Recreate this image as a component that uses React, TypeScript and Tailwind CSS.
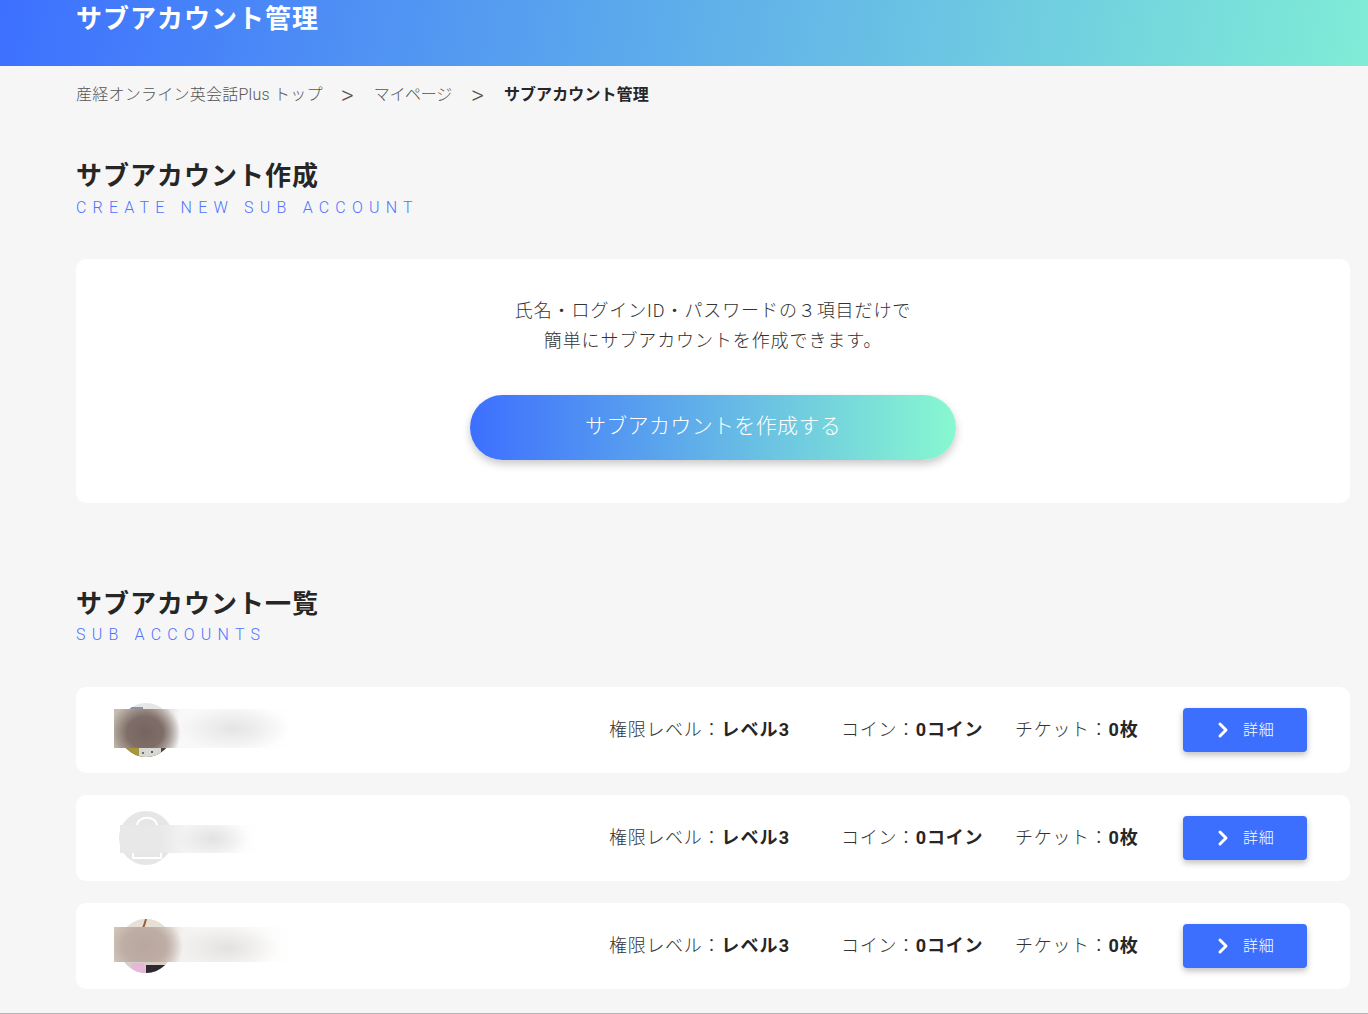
import { ChevronRight } from "lucide-react";

const rows = [
  {
    id: "one",
    box: "left-[38px] top-[22px] w-[182px] h-[39px]",
    patch: "bg-[radial-gradient(ellipse_56px_24px_at_66%_50%,#e4e4e4_0%,rgba(240,240,240,0)_100%),radial-gradient(ellipse_36px_32px_at_17%_60%,#766460_0%,#7f6e68_50%,rgba(190,180,170,0)_100%),linear-gradient(90deg,#c5bdb0_0%,#b8aea6_18%,#f8f8f8_36%,#ffffff_100%)]",
  },
  {
    id: "two",
    box: "left-[44px] top-[30px] w-[139px] h-[28px]",
    patch: "bg-[radial-gradient(ellipse_36px_20px_at_67%_50%,#e2e2e2_0%,rgba(240,240,240,0)_100%),linear-gradient(90deg,#e8e8e8_0%,#e8e8e8_28%,#f4f4f4_48%,#fcfcfc_85%,#ffffff_100%)]",
  },
  {
    id: "three",
    box: "left-[38px] top-[24px] w-[182px] h-[35px]",
    patch: "bg-[radial-gradient(ellipse_52px_24px_at_62%_60%,#e4e2e0_0%,rgba(240,240,240,0)_100%),radial-gradient(ellipse_38px_32px_at_17%_55%,#b9a79e_0%,#bdada4_55%,rgba(200,190,180,0)_100%),linear-gradient(90deg,#d3c9bd_0%,#c9bdb2_18%,#f5f3f1_38%,#ffffff_100%)]",
  },
];

function Avatar({ id }: { id: string }) {
  return (
    <div className="h-[54px] w-[54px] shrink-0 overflow-hidden rounded-full bg-[#e6e6e6]">
      <svg viewBox="0 0 54 54" className="h-full w-full" fill="none">
        {id === "one" && (
          <>
            <rect x="8" y="4" width="16" height="2" fill="#8d94a0" />
            <rect y="30" width="54" height="24" fill="#5f5149" />
            <rect y="44" width="54" height="10" fill="#a8963e" />
            <rect x="20" y="44" width="22" height="10" fill="#d9d9d4" />
            <circle cx="24" cy="50" r="1" fill="#4a4a4a" />
            <circle cx="33" cy="49" r="1" fill="#333333" />
            <rect x="42" y="42" width="12" height="12" fill="#4b4642" />
          </>
        )}
        {id === "two" && (
          <g stroke="#ffffff" strokeWidth="2">
            <path d="M18 24V15c0-11 20-11 20 0v9" />
            <path d="M14 47v-8h28v8z" />
          </g>
        )}
        {id === "three" && (
          <>
            <rect width="54" height="54" fill="#e6e0d6" />
            <path d="M27 0c-1 4-2 7-3 9" stroke="#9a5f3c" strokeWidth="2" />
            <rect y="36" width="54" height="18" fill="#d8cfc8" />
            <path d="M12 44h13l2 10H14z" fill="#e5b7d8" />
            <path d="M27 46h27v8H27z" fill="#2c2a2e" />
          </>
        )}
      </svg>
    </div>
  );
}

function Heading({ ja, en, gap }: { ja: string; en: string; gap: string }) {
  return (
    <div>
      <h2 className="text-[26px] leading-[36px] font-bold tracking-[1px] text-[#262626]">{ja}</h2>
      <p className={`${gap} text-[16px] leading-[24px] font-light tracking-[6.2px] text-[#4f73ff]`}>{en}</p>
    </div>
  );
}

export default function App() {
  return (
    <div className="h-[1014px] overflow-hidden border-b border-[#b5b5b5] bg-[#f6f6f6] font-['Roboto','Noto_Sans_CJK_JP',sans-serif] text-[#333333]">
      <div className="h-[66px] bg-[linear-gradient(100deg,#3d70ff_0%,#80ecd6_100%)] pl-[76px]">
        <h1 className="text-[26px] leading-[39px] font-bold tracking-[1px] text-white">サブアカウント管理</h1>
      </div>

      <div className="flex h-[58px] items-center pl-[76px] text-[16px] font-light text-[#555555]">
        <span className="tracking-[0.25px]">産経オンライン英会話Plus トップ</span>
        <span className="mr-[20px] ml-[18px] text-[25px] leading-none">&gt;</span>
        <span className="tracking-[-0.3px]">マイページ</span>
        <span className="mr-[20px] ml-[19px] text-[25px] leading-none">&gt;</span>
        <span className="font-bold tracking-[0.1px] text-[#262626]">サブアカウント管理</span>
      </div>

      <div className="pt-[34px] pr-[18px] pl-[76px]">
        <Heading ja="サブアカウント作成" en="CREATE NEW SUB ACCOUNT" gap="mt-[2px]" />

        <div className="mt-[39px] flex h-[244px] flex-col items-center rounded-[10px] bg-white pt-[37px]">
          <p className="text-center text-[18px] leading-[30px] font-light tracking-[0.9px] text-[#333333]">
            氏名・ログインID・パスワードの３項目だけで
            <br />
            簡単にサブアカウントを作成できます。
          </p>
          <button className="mt-[39px] h-[65px] w-[486px] rounded-full bg-[linear-gradient(90deg,#3d6fff_0%,#88f8d0_100%)] pb-[2px] text-[21px] font-light tracking-[0.35px] text-white shadow-[0_4px_8px_rgba(0,0,0,0.22)]">
            サブアカウントを作成する
          </button>
        </div>

        <div className="mt-[83px]">
          <Heading ja="サブアカウント一覧" en="SUB ACCOUNTS" gap="mt-[1px]" />
        </div>

        <div className="mt-[40px] flex flex-col gap-[22px]">
          {rows.map((row) => (
            <div key={row.id} className="relative flex h-[86px] items-center rounded-[10px] bg-white px-[43px]">
              <Avatar id={row.id} />
              <div className={`absolute ${row.box} ${row.patch}`} />
              <div className="ml-auto flex items-center text-[18px] font-light tracking-[0.7px] text-[#333333]">
                <div className="w-[232px] -translate-y-[1px]">
                  権限レベル：<span className="font-bold tracking-[1.2px] text-[#262626]">レベル3</span>
                </div>
                <div className="w-[174px] -translate-y-[1px]">
                  コイン：<span className="font-bold tracking-[0.8px] text-[#262626]">0コイン</span>
                </div>
                <div className="w-[168px] -translate-y-[1px]">
                  チケット：<span className="font-bold tracking-[0.8px] text-[#262626]">0枚</span>
                </div>
                <button className="flex h-[44px] w-[124px] items-center rounded-[4px] bg-[#3d6fff] pl-[28px] text-[15px] font-light text-white shadow-[0_3px_6px_rgba(0,0,0,0.25)]">
                  <ChevronRight size={24} strokeWidth={3} />
                  <span className="ml-[8px]">詳細</span>
                </button>
              </div>
            </div>
          ))}
        </div>
      </div>
    </div>
  );
}
